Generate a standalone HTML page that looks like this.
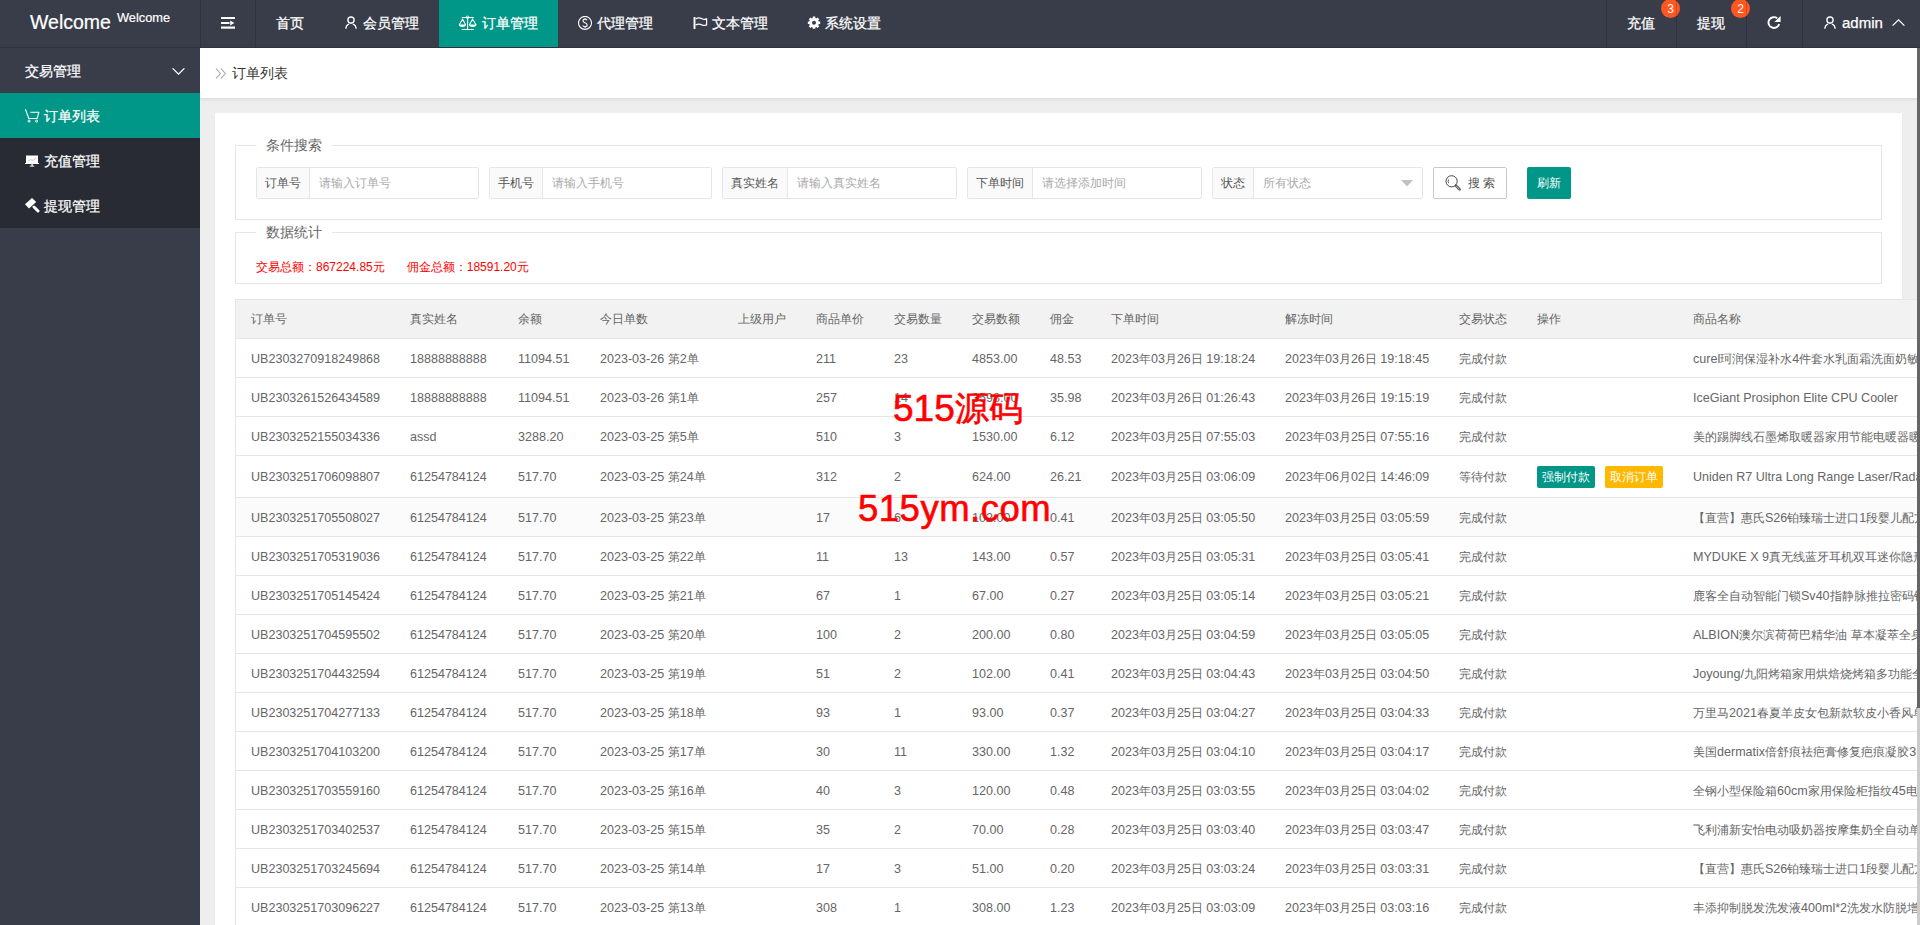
<!DOCTYPE html>
<html><head><meta charset="utf-8">
<style>
*{box-sizing:border-box;margin:0;padding:0}
html,body{width:1920px;height:925px;overflow:hidden;background:#eee;font-family:"Liberation Sans",sans-serif;color:#666}
.abs{position:absolute}
/* header */
#hd{position:absolute;left:0;top:0;width:1920px;height:48px;background:#393D49;border-bottom:1px solid #30333d;color:#fff}
#logo{position:absolute;left:30px;top:0;height:47px;white-space:nowrap;-webkit-text-stroke:0.2px #fff}
#logo .big{position:absolute;left:0;top:10px;font-size:19.5px;line-height:24px}
#logo .sup{position:absolute;left:87px;top:10px;font-size:12.8px;line-height:16px}
.vsep{position:absolute;top:0;width:1px;height:47px;background:rgba(0,0,0,.16);z-index:2}
.nav{position:absolute;top:0;height:47px;font-size:14px;line-height:47px;white-space:nowrap}
.nav svg{position:absolute}
.nav .t{position:absolute;top:0;-webkit-text-stroke:0.25px #fff}
.badge{position:absolute;top:-1px;width:19px;height:19px;border-radius:50%;background:#FF5722;color:#fff;font-size:12px;line-height:21px;text-align:center}
/* side */
#side{position:absolute;left:0;top:48px;width:200px;height:877px;background:#393D49;color:#fff}
.sitem{position:absolute;left:0;width:200px;height:45px;font-size:14px;line-height:45px;white-space:nowrap}
.sitem .t{position:absolute;left:25px;top:1px;-webkit-text-stroke:0.25px #fff}
.sitem svg{position:absolute}
/* body */
#bd{position:absolute;left:200px;top:48px;width:1720px;height:877px;overflow:hidden;background:#eee}
#crumb{position:absolute;left:0;top:0;width:1717px;height:50px;background:#fff;box-shadow:0 1px 4px rgba(0,0,0,.1)}
#crumb .t{position:absolute;left:32px;top:0;line-height:50px;font-size:14px;color:#333}
#card{position:absolute;left:15px;top:65px;width:1687px;height:900px;background:#fff;box-shadow:0 1px 2px rgba(0,0,0,.05)}
.fs{position:absolute;left:20px;width:1647px;border:1px solid #e6e6e6}
.legend{position:absolute;left:20px;top:-11px;padding:0 10px;background:#fff;font-size:14px;line-height:20px;color:#666;white-space:nowrap}
.ig{position:absolute;top:21px;height:32px;border:1px solid #e6e6e6;border-radius:2px;background:#fff;white-space:nowrap}
.ig .lb{position:absolute;left:0;top:0;height:30px;background:#FAFAFA;border-right:1px solid #e6e6e6;font-size:12px;line-height:30px;color:#555;text-align:center}
.ig .ph{position:absolute;top:0;font-size:12px;line-height:30px;color:#aaa}
.btn{position:absolute;top:21px;height:32px;border-radius:2px;font-size:12px;line-height:30px;white-space:nowrap}
#stats{position:absolute;left:20px;top:26px;font-size:12px;line-height:16px;color:#f00;white-space:nowrap}
/* table */
#tbl{position:absolute;left:20px;top:186px;width:1700px;height:700px;border-left:1px solid #e6e6e6;border-top:1px solid #e6e6e6}
.thead{position:absolute;left:0;top:0;width:1700px;height:39px;background:#f2f2f2;border-bottom:1px solid #e6e6e6}
.tr{position:absolute;left:0;width:1700px;border-bottom:1px solid #e6e6e6;background:#fff}
.tr.hover{background:#FBFBFB}
.th,.td{position:absolute;top:0;}
.td{top:1px}
.th,.td{font-size:12.55px;white-space:nowrap;color:#666}
.c{font-size:12px}
.th{line-height:38px}
.btn-xs{display:inline-block;height:22px;line-height:22px;padding:0 5px;position:relative;top:-1px;font-size:12px;color:#fff;border-radius:2px;vertical-align:middle;margin-right:10px}
.teal{background:#009688}
.yellow{background:#FFB800}
#sb{position:absolute;left:1717px;top:0;width:3px;height:877px;background:#ccc}
#sbt{position:absolute;left:0;top:0;width:3px;height:660px;background:#666}
.wm{position:absolute;color:#f00;font-size:35px;-webkit-text-stroke:0.6px #f00;line-height:40px;white-space:nowrap}
</style></head>
<body>
<div id="hd">
  <div id="logo"><span class="big">Welcome</span><span class="sup">Welcome</span></div>
  <div class="vsep" style="left:200px"></div>
  <div class="vsep" style="left:255px"></div>
  <!-- hamburger -->
  <svg class="abs" style="left:221px;top:17px" width="14" height="12" viewBox="0 0 14 12"><rect x="0" y="0" width="14" height="2" fill="#fff"/><rect x="0" y="5" width="8.5" height="2" fill="#fff"/><path d="M9.2 3.6 L13.4 6 L9.2 8.4Z" fill="#fff"/><rect x="0" y="9.5" width="14" height="2.2" fill="#fff"/></svg>
  <div class="nav" style="left:276px"><span class="t" style="left:0">首页</span></div>
  <!-- user -->
  <div class="nav" style="left:324px">
    <svg style="left:21px;top:16px" width="12" height="13" viewBox="0 0 12 13"><circle cx="6" cy="4.1" r="3.1" fill="none" stroke="#fff" stroke-width="1.35"/><path d="M0.9 12.8 C0.9 10.4 2.3 8.7 4.1 8.1 M11.1 12.8 C11.1 10.4 9.7 8.7 7.9 8.1" fill="none" stroke="#fff" stroke-width="1.35"/></svg>
    <span class="t" style="left:39px">会员管理</span>
  </div>
  <div class="nav" style="left:439px;width:119px;background:#009688">
    <svg style="left:16px;top:12px" width="26" height="22" viewBox="0 0 26 22"><g fill="none" stroke="#fff" stroke-width="1.05"><path d="M6.7 5.5 H18.8 M6.7 17.5 H18.8 M12.6 6 V17.5"/><path d="M4.2 12.9 L7.6 7.1 L10.7 12.9 M14.3 12.9 L17.6 7.1 L21.1 12.9"/></g><circle cx="12.6" cy="5.3" r="1.3" fill="none" stroke="#fff" stroke-width="0.9"/><path d="M3.8 12.6 H11 A3.6 2.3 0 0 1 3.8 12.6Z M13.9 12.6 H21.5 A3.8 2.3 0 0 1 13.9 12.6Z" fill="#fff"/></svg>
    <span class="t" style="left:43px">订单管理</span>
  </div>
  <div class="nav" style="left:558px">
    <svg style="left:20px;top:16px" width="14" height="14" viewBox="0 0 14 14"><circle cx="7" cy="6.9" r="6.5" fill="none" stroke="#fff" stroke-width="1.1"/><path d="M9.1 4.4 C8.8 3.5 8 3.1 7 3.1 C5.8 3.1 5 3.8 5 4.8 C5 5.8 5.8 6.3 7 6.8 C8.3 7.3 9.2 7.8 9.2 9 C9.2 10.1 8.3 10.7 7 10.7 C5.9 10.7 5.1 10.3 4.8 9.4 M7 2 V3.1 M7 10.7 V12" fill="none" stroke="#fff" stroke-width="1.1"/></svg>
    <span class="t" style="left:39px">代理管理</span>
  </div>
  <div class="nav" style="left:673px">
    <svg style="left:20px;top:17px" width="15" height="13" viewBox="0 0 15 13"><path d="M1.5 -0.2 V12" stroke="#fff" stroke-width="1.9"/><path d="M2.6 1.9 C4.8 0.6 7.2 0.8 9 1.8 C10.6 2.7 12 2.6 13.6 1.9 V7.9 C12 8.6 10.6 8.8 9 7.9 C7.2 6.9 4.8 6.8 2.6 7.9" fill="none" stroke="#fff" stroke-width="1.2"/></svg>
    <span class="t" style="left:39px">文本管理</span>
  </div>
  <div class="nav" style="left:788px">
    <svg style="left:19px;top:16px" width="14" height="14" viewBox="0 0 14 14"><path fill="#fff" fill-rule="evenodd" d="M11.53 4.82 L11.73 5.43 L13.16 5.39 L13.16 8.01 L11.73 7.97 L11.53 8.58 L11.24 9.15 L12.28 10.13 L10.43 11.98 L9.45 10.94 L8.88 11.23 L8.27 11.43 L8.31 12.86 L5.69 12.86 L5.73 11.43 L5.12 11.23 L4.55 10.94 L3.57 11.98 L1.72 10.13 L2.76 9.15 L2.47 8.58 L2.27 7.97 L0.84 8.01 L0.84 5.39 L2.27 5.43 L2.47 4.82 L2.76 4.25 L1.72 3.27 L3.57 1.42 L4.55 2.46 L5.12 2.17 L5.73 1.97 L5.69 0.54 L8.31 0.54 L8.27 1.97 L8.88 2.17 L9.45 2.46 L10.43 1.42 L12.28 3.27 L11.24 4.25Z M9 6.7 A2 2 0 1 0 5 6.7 A2 2 0 1 0 9 6.7Z"/></svg>
    <span class="t" style="left:37px">系统设置</span>
  </div>
  <!-- right -->
  <div class="vsep" style="left:1606px"></div>
  <div class="nav" style="left:1627px"><span class="t" style="left:0">充值</span></div>
  <div class="badge" style="left:1661px">3</div>
  <div class="vsep" style="left:1676px"></div>
  <div class="nav" style="left:1697px"><span class="t" style="left:0">提现</span></div>
  <div class="badge" style="left:1731px">2</div>
  <div class="vsep" style="left:1746px"></div>
  <svg class="abs" style="left:1766px;top:15px" width="16" height="16" viewBox="0 0 16 16"><path d="M13.12 8.90 A5.4 5.4 0 1 1 11.22 3.24" fill="none" stroke="#fff" stroke-width="1.9"/><path d="M8.4 7 L14.6 7 L14.6 1Z" fill="#fff"/></svg>
  <div class="vsep" style="left:1802px"></div>
  <div class="nav" style="left:1802px">
    <svg style="left:22px;top:16px" width="12" height="13" viewBox="0 0 12 13"><circle cx="6" cy="4.1" r="3.1" fill="none" stroke="#fff" stroke-width="1.35"/><path d="M0.9 12.8 C0.9 10.4 2.3 8.7 4.1 8.1 M11.1 12.8 C11.1 10.4 9.7 8.7 7.9 8.1" fill="none" stroke="#fff" stroke-width="1.35"/></svg>
    <span class="t" style="left:40px;top:-1px;font-size:15px">admin</span>
    <svg style="left:90px;top:19px" width="13" height="8" viewBox="0 0 13 8"><path d="M0.6 6.6 L6.5 0.9 L12.4 6.6" fill="none" stroke="#fff" stroke-width="1.3"/></svg>
  </div>
</div>

<div id="side">
  <div class="sitem" style="top:0"><span class="t">交易管理</span>
    <svg style="left:172px;top:20px" width="13" height="8" viewBox="0 0 13 8"><path d="M0.6 0.3 L6.5 6.2 L12.4 0.3" fill="none" stroke="#fff" stroke-width="1.2"/></svg>
  </div>
  <div class="abs" style="left:0;top:45px;width:200px;height:135px;background:#282B33"></div>
  <div class="sitem" style="top:45px;background:#009688">
    <svg style="left:24px;top:16px" width="16" height="14" viewBox="0 0 16 14"><path d="M1.4 0.2 L4.8 9.5 H13.1 L14.9 3.3 H6.4" fill="none" stroke="#fff" stroke-width="1.1" stroke-linejoin="round"/><circle cx="5.1" cy="12.1" r="1.05" fill="none" stroke="#fff" stroke-width="1"/><circle cx="12.6" cy="12.1" r="1.05" fill="none" stroke="#fff" stroke-width="1"/></svg>
    <span class="t" style="left:44px">订单列表</span>
  </div>
  <div class="sitem" style="top:90px">
    <svg style="left:25px;top:17px" width="14" height="12" viewBox="0 0 14 12"><path d="M1 0.5 H13 V8.5 H1Z" fill="#fff"/><rect x="0" y="8" width="14" height="1" fill="#fff"/><rect x="6.5" y="9" width="1.2" height="2" fill="#fff"/><rect x="4.8" y="10.6" width="4.4" height="1" fill="#fff"/><path d="M3 6 L5.5 4.6 L8 5.4 L11 3.2" stroke="#c9a" stroke-width="0.6" fill="none"/></svg>
    <span class="t" style="left:44px">充值管理</span>
  </div>
  <div class="sitem" style="top:135px">
    <svg style="left:25px;top:15px" width="15" height="15" viewBox="0 0 15 15"><path d="M7 0 L11.2 4 L4 10.6 L0 6.2Z" fill="#fff"/><path d="M9 9 L13 13" stroke="#fff" stroke-width="3" stroke-linecap="round"/></svg>
    <span class="t" style="left:44px">提现管理</span>
  </div>
</div>

<div id="bd">
  <div id="crumb">
    <svg class="abs" style="left:15px;top:20px" width="12" height="11" viewBox="0 0 12 11"><path d="M1 0.6 L5.4 5.5 L1 10.4 M6 0.6 L10.4 5.5 L6 10.4" fill="none" stroke="#aaa" stroke-width="1.1"/></svg>
    <span class="t">订单列表</span>
  </div>
  <div id="card">
    <div class="fs" style="top:32px;height:75px">
      <div class="legend">条件搜索</div>
      <div class="ig" style="left:20px;width:223px"><div class="lb" style="width:53px">订单号</div><div class="ph" style="left:62px">请输入订单号</div></div>
      <div class="ig" style="left:253px;width:223px"><div class="lb" style="width:53px">手机号</div><div class="ph" style="left:62px">请输入手机号</div></div>
      <div class="ig" style="left:486px;width:235px"><div class="lb" style="width:65px">真实姓名</div><div class="ph" style="left:74px">请输入真实姓名</div></div>
      <div class="ig" style="left:731px;width:235px"><div class="lb" style="width:65px">下单时间</div><div class="ph" style="left:74px">请选择添加时间</div></div>
      <div class="ig" style="left:976px;width:211px"><div class="lb" style="width:41px">状态</div><div class="ph" style="left:50px">所有状态</div>
        <svg class="abs" style="left:188px;top:12px" width="12" height="7" viewBox="0 0 12 7"><path d="M0 0 H12 L6 6.5Z" fill="#c2c2c2"/></svg></div>
      <div class="btn" style="left:1197px;width:74px;border:1px solid #C9C9C9;background:#fff;color:#555">
        <svg class="abs" style="left:11px;top:7px" width="17" height="17" viewBox="0 0 17 17"><circle cx="6.6" cy="6.3" r="5.6" fill="none" stroke="#444" stroke-width="1"/><path d="M10.9 10.7 L14.6 14.4" stroke="#555" stroke-width="2.6" stroke-linecap="round"/><path d="M11.2 11 L14.3 14.1" stroke="#fff" stroke-width="0.7"/><path d="M3.7 4.4 A3.2 3.4 0 0 0 3.7 8.2" fill="none" stroke="#555" stroke-width="0.9"/></svg>
        <span class="abs" style="left:34px;top:0">搜 索</span>
      </div>
      <div class="btn" style="left:1291px;width:44px;background:#009688;color:#fff;text-align:center;line-height:32px">刷新</div>
    </div>
    <div class="fs" style="top:119px;height:52px">
      <div class="legend">数据统计</div>
      <div id="stats">交易总额：867224.85元<span style="display:inline-block;width:22px"></span>佣金总额：18591.20元</div>
    </div>
    <div id="tbl"><div class="thead"><div class="th" style="left:15px"><span class="c">订单号</span></div><div class="th" style="left:174px"><span class="c">真实姓名</span></div><div class="th" style="left:282px"><span class="c">余额</span></div><div class="th" style="left:364px"><span class="c">今日单数</span></div><div class="th" style="left:502px"><span class="c">上级用户</span></div><div class="th" style="left:580px"><span class="c">商品单价</span></div><div class="th" style="left:658px"><span class="c">交易数量</span></div><div class="th" style="left:736px"><span class="c">交易数额</span></div><div class="th" style="left:814px"><span class="c">佣金</span></div><div class="th" style="left:875px"><span class="c">下单时间</span></div><div class="th" style="left:1049px"><span class="c">解冻时间</span></div><div class="th" style="left:1223px"><span class="c">交易状态</span></div><div class="th" style="left:1301px"><span class="c">操作</span></div><div class="th" style="left:1457px"><span class="c">商品名称</span></div></div><div class="tr" style="top:39px;height:39px;line-height:38px"><div class="td" style="left:15px">UB2303270918249868</div><div class="td" style="left:174px">18888888888</div><div class="td" style="left:282px">11094.51</div><div class="td" style="left:364px">2023-03-26 <span class="c">第</span>2<span class="c">单</span></div><div class="td" style="left:502px"></div><div class="td" style="left:580px">211</div><div class="td" style="left:658px">23</div><div class="td" style="left:736px">4853.00</div><div class="td" style="left:814px">48.53</div><div class="td" style="left:875px">2023<span class="c">年</span>03<span class="c">月</span>26<span class="c">日</span> 19:18:24</div><div class="td" style="left:1049px">2023<span class="c">年</span>03<span class="c">月</span>26<span class="c">日</span> 19:18:45</div><div class="td" style="left:1223px"><span class="c">完成付款</span></div><div class="td" style="left:1301px"></div><div class="td" style="left:1457px">curel<span class="c">珂润保湿补水</span>4<span class="c">件套水乳面霜洗面奶敏感肌护肤品套装</span></div></div><div class="tr" style="top:78px;height:39px;line-height:38px"><div class="td" style="left:15px">UB2303261526434589</div><div class="td" style="left:174px">18888888888</div><div class="td" style="left:282px">11094.51</div><div class="td" style="left:364px">2023-03-26 <span class="c">第</span>1<span class="c">单</span></div><div class="td" style="left:502px"></div><div class="td" style="left:580px">257</div><div class="td" style="left:658px">14</div><div class="td" style="left:736px">3598.00</div><div class="td" style="left:814px">35.98</div><div class="td" style="left:875px">2023<span class="c">年</span>03<span class="c">月</span>26<span class="c">日</span> 01:26:43</div><div class="td" style="left:1049px">2023<span class="c">年</span>03<span class="c">月</span>26<span class="c">日</span> 19:15:19</div><div class="td" style="left:1223px"><span class="c">完成付款</span></div><div class="td" style="left:1301px"></div><div class="td" style="left:1457px">IceGiant Prosiphon Elite CPU Cooler</div></div><div class="tr" style="top:117px;height:39px;line-height:38px"><div class="td" style="left:15px">UB2303252155034336</div><div class="td" style="left:174px">assd</div><div class="td" style="left:282px">3288.20</div><div class="td" style="left:364px">2023-03-25 <span class="c">第</span>5<span class="c">单</span></div><div class="td" style="left:502px"></div><div class="td" style="left:580px">510</div><div class="td" style="left:658px">3</div><div class="td" style="left:736px">1530.00</div><div class="td" style="left:814px">6.12</div><div class="td" style="left:875px">2023<span class="c">年</span>03<span class="c">月</span>25<span class="c">日</span> 07:55:03</div><div class="td" style="left:1049px">2023<span class="c">年</span>03<span class="c">月</span>25<span class="c">日</span> 07:55:16</div><div class="td" style="left:1223px"><span class="c">完成付款</span></div><div class="td" style="left:1301px"></div><div class="td" style="left:1457px"><span class="c">美的踢脚线石墨烯取暖器家用节能电暖器暖风机</span></div></div><div class="tr" style="top:156px;height:42px;line-height:41px"><div class="td" style="left:15px">UB2303251706098807</div><div class="td" style="left:174px">61254784124</div><div class="td" style="left:282px">517.70</div><div class="td" style="left:364px">2023-03-25 <span class="c">第</span>24<span class="c">单</span></div><div class="td" style="left:502px"></div><div class="td" style="left:580px">312</div><div class="td" style="left:658px">2</div><div class="td" style="left:736px">624.00</div><div class="td" style="left:814px">26.21</div><div class="td" style="left:875px">2023<span class="c">年</span>03<span class="c">月</span>25<span class="c">日</span> 03:06:09</div><div class="td" style="left:1049px">2023<span class="c">年</span>06<span class="c">月</span>02<span class="c">日</span> 14:46:09</div><div class="td" style="left:1223px"><span class="c">等待付款</span></div><div class="td" style="left:1301px"><span class="btn-xs teal">强制付款</span><span class="btn-xs yellow">取消订单</span></div><div class="td" style="left:1457px">Uniden R7 Ultra Long Range Laser/Radar Detector</div></div><div class="tr hover" style="top:198px;height:39px;line-height:38px"><div class="td" style="left:15px">UB2303251705508027</div><div class="td" style="left:174px">61254784124</div><div class="td" style="left:282px">517.70</div><div class="td" style="left:364px">2023-03-25 <span class="c">第</span>23<span class="c">单</span></div><div class="td" style="left:502px"></div><div class="td" style="left:580px">17</div><div class="td" style="left:658px">6</div><div class="td" style="left:736px">102.00</div><div class="td" style="left:814px">0.41</div><div class="td" style="left:875px">2023<span class="c">年</span>03<span class="c">月</span>25<span class="c">日</span> 03:05:50</div><div class="td" style="left:1049px">2023<span class="c">年</span>03<span class="c">月</span>25<span class="c">日</span> 03:05:59</div><div class="td" style="left:1223px"><span class="c">完成付款</span></div><div class="td" style="left:1301px"></div><div class="td" style="left:1457px"><span class="c">【直营】惠氏</span>S26<span class="c">铂臻瑞士进口</span>1<span class="c">段婴儿配方奶粉</span></div></div><div class="tr" style="top:237px;height:39px;line-height:38px"><div class="td" style="left:15px">UB2303251705319036</div><div class="td" style="left:174px">61254784124</div><div class="td" style="left:282px">517.70</div><div class="td" style="left:364px">2023-03-25 <span class="c">第</span>22<span class="c">单</span></div><div class="td" style="left:502px"></div><div class="td" style="left:580px">11</div><div class="td" style="left:658px">13</div><div class="td" style="left:736px">143.00</div><div class="td" style="left:814px">0.57</div><div class="td" style="left:875px">2023<span class="c">年</span>03<span class="c">月</span>25<span class="c">日</span> 03:05:31</div><div class="td" style="left:1049px">2023<span class="c">年</span>03<span class="c">月</span>25<span class="c">日</span> 03:05:41</div><div class="td" style="left:1223px"><span class="c">完成付款</span></div><div class="td" style="left:1301px"></div><div class="td" style="left:1457px">MYDUKE X 9<span class="c">真无线蓝牙耳机双耳迷你隐形入耳式</span></div></div><div class="tr" style="top:276px;height:39px;line-height:38px"><div class="td" style="left:15px">UB2303251705145424</div><div class="td" style="left:174px">61254784124</div><div class="td" style="left:282px">517.70</div><div class="td" style="left:364px">2023-03-25 <span class="c">第</span>21<span class="c">单</span></div><div class="td" style="left:502px"></div><div class="td" style="left:580px">67</div><div class="td" style="left:658px">1</div><div class="td" style="left:736px">67.00</div><div class="td" style="left:814px">0.27</div><div class="td" style="left:875px">2023<span class="c">年</span>03<span class="c">月</span>25<span class="c">日</span> 03:05:14</div><div class="td" style="left:1049px">2023<span class="c">年</span>03<span class="c">月</span>25<span class="c">日</span> 03:05:21</div><div class="td" style="left:1223px"><span class="c">完成付款</span></div><div class="td" style="left:1301px"></div><div class="td" style="left:1457px"><span class="c">鹿客全自动智能门锁</span>Sv40<span class="c">指静脉推拉密码锁指纹锁</span></div></div><div class="tr" style="top:315px;height:39px;line-height:38px"><div class="td" style="left:15px">UB2303251704595502</div><div class="td" style="left:174px">61254784124</div><div class="td" style="left:282px">517.70</div><div class="td" style="left:364px">2023-03-25 <span class="c">第</span>20<span class="c">单</span></div><div class="td" style="left:502px"></div><div class="td" style="left:580px">100</div><div class="td" style="left:658px">2</div><div class="td" style="left:736px">200.00</div><div class="td" style="left:814px">0.80</div><div class="td" style="left:875px">2023<span class="c">年</span>03<span class="c">月</span>25<span class="c">日</span> 03:04:59</div><div class="td" style="left:1049px">2023<span class="c">年</span>03<span class="c">月</span>25<span class="c">日</span> 03:05:05</div><div class="td" style="left:1223px"><span class="c">完成付款</span></div><div class="td" style="left:1301px"></div><div class="td" style="left:1457px">ALBION<span class="c">澳尔滨荷荷巴精华油</span> <span class="c">草本凝萃全身护理油</span></div></div><div class="tr" style="top:354px;height:39px;line-height:38px"><div class="td" style="left:15px">UB2303251704432594</div><div class="td" style="left:174px">61254784124</div><div class="td" style="left:282px">517.70</div><div class="td" style="left:364px">2023-03-25 <span class="c">第</span>19<span class="c">单</span></div><div class="td" style="left:502px"></div><div class="td" style="left:580px">51</div><div class="td" style="left:658px">2</div><div class="td" style="left:736px">102.00</div><div class="td" style="left:814px">0.41</div><div class="td" style="left:875px">2023<span class="c">年</span>03<span class="c">月</span>25<span class="c">日</span> 03:04:43</div><div class="td" style="left:1049px">2023<span class="c">年</span>03<span class="c">月</span>25<span class="c">日</span> 03:04:50</div><div class="td" style="left:1223px"><span class="c">完成付款</span></div><div class="td" style="left:1301px"></div><div class="td" style="left:1457px">Joyoung/<span class="c">九阳烤箱家用烘焙烧烤箱多功能全自动</span></div></div><div class="tr" style="top:393px;height:39px;line-height:38px"><div class="td" style="left:15px">UB2303251704277133</div><div class="td" style="left:174px">61254784124</div><div class="td" style="left:282px">517.70</div><div class="td" style="left:364px">2023-03-25 <span class="c">第</span>18<span class="c">单</span></div><div class="td" style="left:502px"></div><div class="td" style="left:580px">93</div><div class="td" style="left:658px">1</div><div class="td" style="left:736px">93.00</div><div class="td" style="left:814px">0.37</div><div class="td" style="left:875px">2023<span class="c">年</span>03<span class="c">月</span>25<span class="c">日</span> 03:04:27</div><div class="td" style="left:1049px">2023<span class="c">年</span>03<span class="c">月</span>25<span class="c">日</span> 03:04:33</div><div class="td" style="left:1223px"><span class="c">完成付款</span></div><div class="td" style="left:1301px"></div><div class="td" style="left:1457px"><span class="c">万里马</span>2021<span class="c">春夏羊皮女包新款软皮小香风单肩包</span></div></div><div class="tr" style="top:432px;height:39px;line-height:38px"><div class="td" style="left:15px">UB2303251704103200</div><div class="td" style="left:174px">61254784124</div><div class="td" style="left:282px">517.70</div><div class="td" style="left:364px">2023-03-25 <span class="c">第</span>17<span class="c">单</span></div><div class="td" style="left:502px"></div><div class="td" style="left:580px">30</div><div class="td" style="left:658px">11</div><div class="td" style="left:736px">330.00</div><div class="td" style="left:814px">1.32</div><div class="td" style="left:875px">2023<span class="c">年</span>03<span class="c">月</span>25<span class="c">日</span> 03:04:10</div><div class="td" style="left:1049px">2023<span class="c">年</span>03<span class="c">月</span>25<span class="c">日</span> 03:04:17</div><div class="td" style="left:1223px"><span class="c">完成付款</span></div><div class="td" style="left:1301px"></div><div class="td" style="left:1457px"><span class="c">美国</span>dermatix<span class="c">倍舒痕祛疤膏修复疤痕凝胶</span>3</div></div><div class="tr" style="top:471px;height:39px;line-height:38px"><div class="td" style="left:15px">UB2303251703559160</div><div class="td" style="left:174px">61254784124</div><div class="td" style="left:282px">517.70</div><div class="td" style="left:364px">2023-03-25 <span class="c">第</span>16<span class="c">单</span></div><div class="td" style="left:502px"></div><div class="td" style="left:580px">40</div><div class="td" style="left:658px">3</div><div class="td" style="left:736px">120.00</div><div class="td" style="left:814px">0.48</div><div class="td" style="left:875px">2023<span class="c">年</span>03<span class="c">月</span>25<span class="c">日</span> 03:03:55</div><div class="td" style="left:1049px">2023<span class="c">年</span>03<span class="c">月</span>25<span class="c">日</span> 03:04:02</div><div class="td" style="left:1223px"><span class="c">完成付款</span></div><div class="td" style="left:1301px"></div><div class="td" style="left:1457px"><span class="c">全钢小型保险箱</span>60cm<span class="c">家用保险柜指纹</span>45<span class="c">电子密码</span></div></div><div class="tr" style="top:510px;height:39px;line-height:38px"><div class="td" style="left:15px">UB2303251703402537</div><div class="td" style="left:174px">61254784124</div><div class="td" style="left:282px">517.70</div><div class="td" style="left:364px">2023-03-25 <span class="c">第</span>15<span class="c">单</span></div><div class="td" style="left:502px"></div><div class="td" style="left:580px">35</div><div class="td" style="left:658px">2</div><div class="td" style="left:736px">70.00</div><div class="td" style="left:814px">0.28</div><div class="td" style="left:875px">2023<span class="c">年</span>03<span class="c">月</span>25<span class="c">日</span> 03:03:40</div><div class="td" style="left:1049px">2023<span class="c">年</span>03<span class="c">月</span>25<span class="c">日</span> 03:03:47</div><div class="td" style="left:1223px"><span class="c">完成付款</span></div><div class="td" style="left:1301px"></div><div class="td" style="left:1457px"><span class="c">飞利浦新安怡电动吸奶器按摩集奶全自动单边</span></div></div><div class="tr" style="top:549px;height:39px;line-height:38px"><div class="td" style="left:15px">UB2303251703245694</div><div class="td" style="left:174px">61254784124</div><div class="td" style="left:282px">517.70</div><div class="td" style="left:364px">2023-03-25 <span class="c">第</span>14<span class="c">单</span></div><div class="td" style="left:502px"></div><div class="td" style="left:580px">17</div><div class="td" style="left:658px">3</div><div class="td" style="left:736px">51.00</div><div class="td" style="left:814px">0.20</div><div class="td" style="left:875px">2023<span class="c">年</span>03<span class="c">月</span>25<span class="c">日</span> 03:03:24</div><div class="td" style="left:1049px">2023<span class="c">年</span>03<span class="c">月</span>25<span class="c">日</span> 03:03:31</div><div class="td" style="left:1223px"><span class="c">完成付款</span></div><div class="td" style="left:1301px"></div><div class="td" style="left:1457px"><span class="c">【直营】惠氏</span>S26<span class="c">铂臻瑞士进口</span>1<span class="c">段婴儿配方奶粉</span></div></div><div class="tr" style="top:588px;height:39px;line-height:38px"><div class="td" style="left:15px">UB2303251703096227</div><div class="td" style="left:174px">61254784124</div><div class="td" style="left:282px">517.70</div><div class="td" style="left:364px">2023-03-25 <span class="c">第</span>13<span class="c">单</span></div><div class="td" style="left:502px"></div><div class="td" style="left:580px">308</div><div class="td" style="left:658px">1</div><div class="td" style="left:736px">308.00</div><div class="td" style="left:814px">1.23</div><div class="td" style="left:875px">2023<span class="c">年</span>03<span class="c">月</span>25<span class="c">日</span> 03:03:09</div><div class="td" style="left:1049px">2023<span class="c">年</span>03<span class="c">月</span>25<span class="c">日</span> 03:03:16</div><div class="td" style="left:1223px"><span class="c">完成付款</span></div><div class="td" style="left:1301px"></div><div class="td" style="left:1457px"><span class="c">丰添抑制脱发洗发液</span>400ml*2<span class="c">洗发水防脱增发</span></div></div></div>
  </div>
  <div id="sb"><div id="sbt"></div></div>
  <div class="wm" style="left:693px;top:341px"><span style="font-size:37px">515</span><span style="font-size:34px;position:relative;top:-1.5px">源码</span></div>
  <div class="wm" style="left:658px;top:441px;font-size:36.5px;letter-spacing:0.5px">515ym.com</div>
</div>
</body></html>
